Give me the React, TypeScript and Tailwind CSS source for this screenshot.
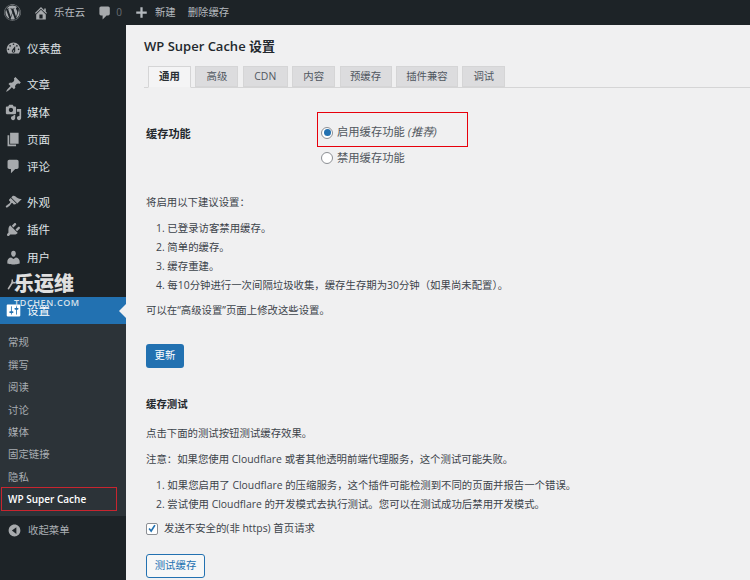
import { FaWordpress } from "react-icons/fa";

const P: Record<string, string> = {
  dashboard: "M3.76 16h12.48c1.1-1.37 1.76-3.11 1.76-5 0-4.42-3.58-8-8-8s-8 3.58-8 8c0 1.89.66 3.63 1.76 5zM10 4c.55 0 1 .45 1 1s-.45 1-1 1-1-.45-1-1 .45-1 1-1zM6 6c.55 0 1 .45 1 1s-.45 1-1 1-1-.45-1-1 .45-1 1-1zm8 0c.55 0 1 .45 1 1s-.45 1-1 1-1-.45-1-1 .45-1 1-1zm-5.37 5.55L12 7v6c0 1.1-.9 2-2 2s-2-.9-2-2c0-.57.24-1.08.63-1.45zM4 10c.55 0 1 .45 1 1s-.45 1-1 1-1-.45-1-1 .45-1 1-1zm12 0c.55 0 1 .45 1 1s-.45 1-1 1-1-.45-1-1 .45-1 1-1zm-5 3c0-.55-.45-1-1-1s-1 .45-1 1 .45 1 1 1 1-.45 1-1z",
  post: "M10.44 3.02l1.82-1.82 6.36 6.35-1.83 1.82c-1.05-.68-2.48-.57-3.41.36l-.75.75c-.92.93-1.04 2.35-.35 3.41l-1.83 1.82-2.41-2.41-2.8 2.79c-.42.42-3.38 2.71-3.8 2.29s1.86-3.39 2.28-3.81l2.79-2.79L4.1 9.36l1.83-1.82c1.05.69 2.48.57 3.4-.36l.75-.75c.93-.92 1.05-2.35.36-3.41z",
  media: "M13 11V4c0-.55-.45-1-1-1h-1.67L9 1H5L3.67 3H2c-.55 0-1 .45-1 1v7c0 .55.45 1 1 1h10c.55 0 1-.45 1-1zM7 4.5c1.38 0 2.5 1.12 2.5 2.5S8.38 9.5 7 9.5 4.5 8.38 4.5 7 5.62 4.5 7 4.5zM14 6h5v10.5c0 1.38-1.12 2.5-2.5 2.5S14 17.88 14 16.5s1.12-2.5 2.5-2.5c.17 0 .34.02.5.05V9h-3V6zm-4 8.05V13h2v3.5c0 1.38-1.12 2.5-2.5 2.5S7 17.88 7 16.5 8.12 14 9.5 14c.17 0 .34.02.5.05z",
  page: "M6 15V2h10v13H6zm-1 1h8v2H3V5h2v11z",
  comment: "M5 2h9c1.1 0 2 .9 2 2v7c0 1.1-.9 2-2 2h-2l-5 5v-5H5c-1.1 0-2-.9-2-2V4c0-1.1.9-2 2-2z",
  appearance: "M14.48 11.06L7.41 3.99l1.5-1.5c.5-.56 2.3-.47 3.51.32 1.21.8 1.43 1.28 2.91 2.1 1.18.64 2.45 1.26 4.45.85zm-.71.71L6.7 4.7 4.93 6.47c-.39.39-.39 1.02 0 1.41l1.06 1.06c.39.39.39 1.03 0 1.42-.6.6-1.43 1.11-2.21 1.69-.35.26-.7.53-1.01.84C1.43 13.23.4 14.91 1.2 15.71c.8.8 2.48-.23 3.82-1.57.31-.31.58-.66.84-1.01.58-.78 1.09-1.61 1.69-2.21.39-.39 1.02-.39 1.41 0l1.06 1.06c.39.39 1.02.39 1.41 0z",
  plugins: "M13.11 4.36L9.87 7.6 8 5.73l3.24-3.24c.35-.34 1.05-.2 1.56.32.52.51.66 1.21.31 1.55zm-8 1.77l.91-1.12 9.01 9.01-1.19.84c-.71.71-2.63 1.16-3.82 1.16H6.14L4.9 17.26c-.59.59-1.54.59-2.12 0-.59-.58-.59-1.53 0-2.12l1.24-1.24v-3.88c0-1.13.4-3.19 1.09-3.89zm7.26 3.97l3.24-3.24c.34-.35 1.04-.21 1.55.31.52.51.66 1.21.31 1.55l-3.24 3.25z",
  users: "M10 9.25c-2.27 0-2.73-3.44-2.73-3.44C7 4.02 7.82 2 9.97 2c2.16 0 2.98 2.02 2.71 3.81 0 0-.41 3.44-2.68 3.44zm0 2.57L12.72 10c2.39 0 4.52 2.33 4.52 4.53v2.49s-3.65 1.13-7.24 1.13c-3.65 0-7.24-1.13-7.24-1.13v-2.49c0-2.25 1.94-4.48 4.47-4.48z",
  settings: "M18 16V4c0-.55-.45-1-1-1H3c-.55 0-1 .45-1 1v12c0 .55.45 1 1 1h14c.55 0 1-.45 1-1zM8 11h1c.55 0 1 .45 1 1s-.45 1-1 1H8v1.5c0 .28-.22.5-.5.5s-.5-.22-.5-.5V13H6c-.55 0-1-.45-1-1s.45-1 1-1h1V5.5c0-.28.22-.5.5-.5s.5.22.5.5V11zm5-2h-1c-.55 0-1-.45-1-1s.45-1 1-1h1V5.5c0-.28.22-.5.5-.5s.5.22.5.5V7h1c.55 0 1 .45 1 1s-.45 1-1 1h-1v5.5c0 .28-.22.5-.5.5s-.5-.22-.5-.5V9z",
  collapse: "M10 2.16c4.33 0 7.84 3.51 7.84 7.84s-3.51 7.84-7.84 7.84S2.16 14.33 2.16 10 5.67 2.16 10 2.16zM12.5 5.5L6.5 10l6 4.5z",
  home: "M16 8.5l1.53 1.53-1.06 1.06L10 4.62l-6.47 6.47-1.06-1.06L10 2.5l4 4v-2h2v4zm-6-2.46l6 5.99V18H4v-5.97zM12 17v-5H8v5h4z",
  plus: "M17 8.5v3h-5.5V17h-3v-5.5H3v-3h5.5V3h3v5.5H17z",
};

function Ic({ name, size = 18, className = "" }: { name: string; size?: number; className?: string }) {
  return (
    <svg viewBox="0 0 20 20" width={size} height={size} fill="currentColor" className={`shrink-0 ${className}`}>
      <path d={P[name]} />
    </svg>
  );
}

function MenuItem({ icon, label, h, active }: { icon: string; label: string; h: string; active?: boolean }) {
  return (
    <div className={`flex items-center pl-[5px] relative ${h} ${active ? "bg-[#2271b1] text-white" : "text-[#dfe2e5]"}`}>
      <Ic name={icon} size={17} className={active ? "text-white" : "text-[#a7aaad]"} />
      <span className="ml-[5px] mt-[1px] text-[11.5px]">{label}</span>
      {active && (
        <span className="absolute right-0 top-1/2 -translate-y-1/2 border-y-[7px] border-r-[7px] border-y-transparent border-r-[#f0f0f1]" />
      )}
    </div>
  );
}

const Sub = ({ label, bold }: { label: string; bold?: boolean }) => (
  <div className={`h-[22.4px] flex items-center pl-[8px] pt-[2px] ${bold ? "text-white font-semibold text-[10px]" : "text-[#a9aeb3] text-[10.4px]"}`}>
    {label}
  </div>
);

const tabs: [string, string][] = [
  ["高级", "w-[43px]"],
  ["CDN", "w-[45px]"],
  ["内容", "w-[43px]"],
  ["预缓存", "w-[52px]"],
  ["插件兼容", "w-[62px]"],
  ["调试", "w-[43px]"],
];

const Row = ({ children, h = "h-[19px]" }: { children: React.ReactNode; h?: string }) => (
  <div className={`${h} flex items-center`}>{children}</div>
);

export default function App() {
  return (
    <div
      className="w-[750px] h-[580px] overflow-hidden bg-[#f0f0f1] flex flex-col relative text-[#3c434a]"
      style={{ fontFamily: '"Open Sans","Noto Sans","Noto Sans CJK SC",sans-serif' }}
    >
      {/* admin bar */}
      <div className="h-[25px] shrink-0 bg-[#1d2327] flex items-center text-[#b4b9be] text-[10.4px]">
        <FaWordpress size={17} className="ml-[4px] text-[#a7aaad]" />
        <Ic name="home" size={16} className="ml-[12px] text-[#a7aaad]" />
        <span className="ml-[5px] text-[#b9bdc1]">乐在云</span>
        <Ic name="comment" size={16} className="ml-[12px] text-[#a7aaad]" />
        <span className="ml-[3px] text-[#6b7075] text-[10px]">0</span>
        <Ic name="plus" size={15} className="ml-[12px] text-[#b4b9be]" />
        <span className="ml-[6px]">新建</span>
        <span className="ml-[12px]">删除缓存</span>
      </div>

      <div className="flex flex-1 min-h-0">
        {/* sidebar */}
        <div className="w-[126px] shrink-0 bg-[#1d2327] pt-[10px] flex flex-col">
          <MenuItem icon="dashboard" label="仪表盘" h="h-[27px]" />
          <div className="h-[9px]" />
          <MenuItem icon="post" label="文章" h="h-[27px]" />
          <MenuItem icon="media" label="媒体" h="h-[28px]" />
          <MenuItem icon="page" label="页面" h="h-[27px]" />
          <MenuItem icon="comment" label="评论" h="h-[27px]" />
          <div className="h-[9px]" />
          <MenuItem icon="appearance" label="外观" h="h-[27px]" />
          <MenuItem icon="plugins" label="插件" h="h-[27px]" />
          <MenuItem icon="users" label="用户" h="h-[28px]" />
          <div className="h-[26px]" />
          <MenuItem icon="settings" label="设置" h="h-[27px]" active />
          <div className="bg-[#2c3338] pt-[7px] pb-[6px]">
            <Sub label="常规" />
            <Sub label="撰写" />
            <Sub label="阅读" />
            <Sub label="讨论" />
            <Sub label="媒体" />
            <Sub label="固定链接" />
            <Sub label="隐私" />
            <Sub label="WP Super Cache" bold />
          </div>
          <div className="flex items-center pl-[7px] h-[28px] text-[#a9aeb3] text-[10.4px]">
            <Ic name="collapse" size={15} className="text-[#a7aaad]" />
            <span className="ml-[6px] mt-[2px]">收起菜单</span>
          </div>
        </div>

        {/* main */}
        <div className="flex-1 min-w-0 pl-[18px]">
          <h1 className="h-[24px] mt-[10px] flex items-center text-[13px] font-semibold text-[#23282d]">
            WP Super Cache 设置
          </h1>
          <div className="mt-[7px] h-[22px] flex gap-[4.4px] pl-[4px] border-b border-[#d5d5d6] items-start">
            <div className="w-[43px] h-[22px] bg-[#f4f4f5] border border-[#d5d5d6] border-b-[#f0f0f1] flex items-center justify-center text-[10.4px] font-semibold text-[#2a2f33]">
              通用
            </div>
            {tabs.map(([t, w]) => (
              <div key={t} className={`${w} h-[21px] bg-[#dcdcde] border border-[#d5d5d6] flex items-center justify-center text-[10.4px] text-[#50575e]`}>
                {t}
              </div>
            ))}
          </div>

          <div className="mt-[24px] pl-[2px] flex">
            <div className="w-[171px] pt-[14px] text-[11.2px] font-semibold text-[#23282d]">缓存功能</div>
            <div>
              <div className="w-[151px] h-[35px] border border-red-600 flex items-center pl-[3px] pt-[6px] text-[11.3px] text-[#50575e]">
                <span className="w-[12px] h-[12px] rounded-full border border-[#8c8f94] bg-white flex items-center justify-center">
                  <span className="w-[7px] h-[7px] rounded-full bg-[#2271b1]" />
                </span>
                <span className="ml-[4px]">启用缓存功能 <em>(推荐)</em></span>
              </div>
              <div className="h-[22px] flex items-center pl-[4px] text-[11.3px] text-[#50575e]">
                <span className="w-[12px] h-[12px] rounded-full border border-[#8c8f94] bg-white" />
                <span className="ml-[4px]">禁用缓存功能</span>
              </div>
            </div>
          </div>

          <div className="pl-[2px] text-[10.4px]">
            <div className="mt-[24px]"><Row>将启用以下建议设置：</Row></div>
            <div className="mt-[7px] pl-[10px]">
              <Row>1. 已登录访客禁用缓存。</Row>
              <Row>2. 简单的缓存。</Row>
              <Row>3. 缓存重建。</Row>
              <Row>4. 每10分钟进行一次间隔垃圾收集，缓存生存期为30分钟（如果尚未配置）。</Row>
            </div>
            <div className="mt-[6px]"><Row>可以在“高级设置”页面上修改这些设置。</Row></div>
            <button className="mt-[24px] block w-[38px] h-[24px] bg-[#2271b1] rounded-[3px] text-white text-[10.4px]">更新</button>
            <div className="mt-[27px] font-semibold text-[#23282d]"><Row>缓存测试</Row></div>
            <div className="mt-[10px]"><Row>点击下面的测试按钮测试缓存效果。</Row></div>
            <div className="mt-[7px]"><Row>注意：如果您使用 Cloudflare 或者其他透明前端代理服务，这个测试可能失败。</Row></div>
            <div className="mt-[7px] pl-[10px]">
              <Row>1. 如果您启用了 Cloudflare 的压缩服务，这个插件可能检测到不同的页面并报告一个错误。</Row>
              <Row>2. 尝试使用 Cloudflare 的开发模式去执行测试。您可以在测试成功后禁用开发模式。</Row>
            </div>
            <div className="mt-[5px] h-[19px] flex items-center">
              <span className="w-[12px] h-[12px] rounded-[2px] border border-[#8c8f94] bg-white flex items-center justify-center">
                <svg viewBox="0 0 12 12" width="11" height="11" fill="none" stroke="#2271b1" strokeWidth="2">
                  <path d="M2.5 6l2.5 3 4.5-7" />
                </svg>
              </span>
              <span className="ml-[6px]">发送不安全的(非 https) 首页请求</span>
            </div>
            <button className="mt-[16px] block w-[59px] h-[24px] bg-[#f6f7f7] border border-[#2271b1] rounded-[3px] text-[#2271b1] text-[10.4px]">测试缓存</button>
          </div>
        </div>
      </div>

      {/* overlays: watermark and annotation */}
      <div className="absolute left-[6px] top-[272px] flex items-center text-[#e0e0e0] text-[20px] font-black leading-[24px]">
        <svg viewBox="0 0 12 16" width="10" height="15" fill="none" stroke="#b5b5b5" strokeLinecap="round">
          <path d="M3 13 L8 5" strokeWidth="2" />
          <path d="M7.5 2.5 L7.5 6 L11 6" strokeWidth="1.8" />
        </svg>
        <span className="-ml-[2px]">乐运维</span>
      </div>
      <div className="absolute left-[14px] top-[297px] text-[#d5e0ea] text-[9px] leading-[11px] tracking-[0.6px] font-semibold">TDCHEN.COM</div>
      <div className="absolute left-[1px] top-[487px] w-[116px] h-[24px] border border-[#c8252f]" />
    </div>
  );
}
